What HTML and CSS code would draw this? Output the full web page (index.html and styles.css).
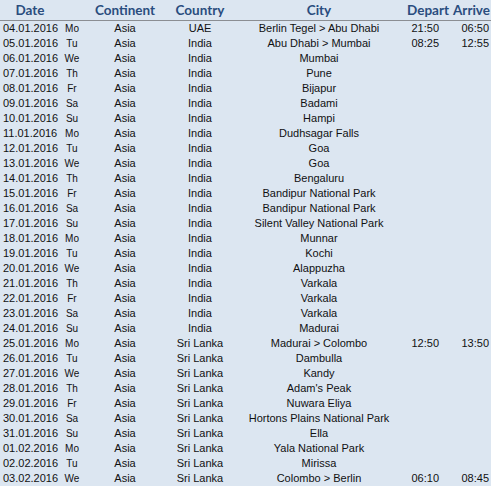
FILE: index.html
```html
<!DOCTYPE html>
<html>
<head>
<meta charset="utf-8">
<link rel="stylesheet" href="styles.css">
</head>
<body>
<div class="sheet">
  <div class="row head">
    <div class="c date">Date</div>
    <div class="c wd"></div>
    <div class="c cont">Continent</div>
    <div class="c ctry">Country</div>
    <div class="c city">City</div>
    <div class="c dep">Depart</div>
    <div class="c arr">Arrive</div>
  </div>
  <div class="body" id="body">
    <div class="row"><div class="c date">04.01.2016</div><div class="c wd">Mo</div><div class="c cont">Asia</div><div class="c ctry">UAE</div><div class="c city">Berlin Tegel &gt; Abu Dhabi</div><div class="c dep">21:50</div><div class="c arr">06:50</div></div>
    <div class="row"><div class="c date">05.01.2016</div><div class="c wd">Tu</div><div class="c cont">Asia</div><div class="c ctry">India</div><div class="c city">Abu Dhabi &gt; Mumbai</div><div class="c dep">08:25</div><div class="c arr">12:55</div></div>
    <div class="row"><div class="c date">06.01.2016</div><div class="c wd">We</div><div class="c cont">Asia</div><div class="c ctry">India</div><div class="c city">Mumbai</div><div class="c dep"></div><div class="c arr"></div></div>
    <div class="row"><div class="c date">07.01.2016</div><div class="c wd">Th</div><div class="c cont">Asia</div><div class="c ctry">India</div><div class="c city">Pune</div><div class="c dep"></div><div class="c arr"></div></div>
    <div class="row"><div class="c date">08.01.2016</div><div class="c wd">Fr</div><div class="c cont">Asia</div><div class="c ctry">India</div><div class="c city">Bijapur</div><div class="c dep"></div><div class="c arr"></div></div>
    <div class="row"><div class="c date">09.01.2016</div><div class="c wd">Sa</div><div class="c cont">Asia</div><div class="c ctry">India</div><div class="c city">Badami</div><div class="c dep"></div><div class="c arr"></div></div>
    <div class="row"><div class="c date">10.01.2016</div><div class="c wd">Su</div><div class="c cont">Asia</div><div class="c ctry">India</div><div class="c city">Hampi</div><div class="c dep"></div><div class="c arr"></div></div>
    <div class="row"><div class="c date">11.01.2016</div><div class="c wd">Mo</div><div class="c cont">Asia</div><div class="c ctry">India</div><div class="c city">Dudhsagar Falls</div><div class="c dep"></div><div class="c arr"></div></div>
    <div class="row"><div class="c date">12.01.2016</div><div class="c wd">Tu</div><div class="c cont">Asia</div><div class="c ctry">India</div><div class="c city">Goa</div><div class="c dep"></div><div class="c arr"></div></div>
    <div class="row"><div class="c date">13.01.2016</div><div class="c wd">We</div><div class="c cont">Asia</div><div class="c ctry">India</div><div class="c city">Goa</div><div class="c dep"></div><div class="c arr"></div></div>
    <div class="row"><div class="c date">14.01.2016</div><div class="c wd">Th</div><div class="c cont">Asia</div><div class="c ctry">India</div><div class="c city">Bengaluru</div><div class="c dep"></div><div class="c arr"></div></div>
    <div class="row"><div class="c date">15.01.2016</div><div class="c wd">Fr</div><div class="c cont">Asia</div><div class="c ctry">India</div><div class="c city">Bandipur National Park</div><div class="c dep"></div><div class="c arr"></div></div>
    <div class="row"><div class="c date">16.01.2016</div><div class="c wd">Sa</div><div class="c cont">Asia</div><div class="c ctry">India</div><div class="c city">Bandipur National Park</div><div class="c dep"></div><div class="c arr"></div></div>
    <div class="row"><div class="c date">17.01.2016</div><div class="c wd">Su</div><div class="c cont">Asia</div><div class="c ctry">India</div><div class="c city">Silent Valley National Park</div><div class="c dep"></div><div class="c arr"></div></div>
    <div class="row"><div class="c date">18.01.2016</div><div class="c wd">Mo</div><div class="c cont">Asia</div><div class="c ctry">India</div><div class="c city">Munnar</div><div class="c dep"></div><div class="c arr"></div></div>
    <div class="row"><div class="c date">19.01.2016</div><div class="c wd">Tu</div><div class="c cont">Asia</div><div class="c ctry">India</div><div class="c city">Kochi</div><div class="c dep"></div><div class="c arr"></div></div>
    <div class="row"><div class="c date">20.01.2016</div><div class="c wd">We</div><div class="c cont">Asia</div><div class="c ctry">India</div><div class="c city">Alappuzha</div><div class="c dep"></div><div class="c arr"></div></div>
    <div class="row"><div class="c date">21.01.2016</div><div class="c wd">Th</div><div class="c cont">Asia</div><div class="c ctry">India</div><div class="c city">Varkala</div><div class="c dep"></div><div class="c arr"></div></div>
    <div class="row"><div class="c date">22.01.2016</div><div class="c wd">Fr</div><div class="c cont">Asia</div><div class="c ctry">India</div><div class="c city">Varkala</div><div class="c dep"></div><div class="c arr"></div></div>
    <div class="row"><div class="c date">23.01.2016</div><div class="c wd">Sa</div><div class="c cont">Asia</div><div class="c ctry">India</div><div class="c city">Varkala</div><div class="c dep"></div><div class="c arr"></div></div>
    <div class="row"><div class="c date">24.01.2016</div><div class="c wd">Su</div><div class="c cont">Asia</div><div class="c ctry">India</div><div class="c city">Madurai</div><div class="c dep"></div><div class="c arr"></div></div>
    <div class="row"><div class="c date">25.01.2016</div><div class="c wd">Mo</div><div class="c cont">Asia</div><div class="c ctry">Sri Lanka</div><div class="c city">Madurai &gt; Colombo</div><div class="c dep">12:50</div><div class="c arr">13:50</div></div>
    <div class="row"><div class="c date">26.01.2016</div><div class="c wd">Tu</div><div class="c cont">Asia</div><div class="c ctry">Sri Lanka</div><div class="c city">Dambulla</div><div class="c dep"></div><div class="c arr"></div></div>
    <div class="row"><div class="c date">27.01.2016</div><div class="c wd">We</div><div class="c cont">Asia</div><div class="c ctry">Sri Lanka</div><div class="c city">Kandy</div><div class="c dep"></div><div class="c arr"></div></div>
    <div class="row"><div class="c date">28.01.2016</div><div class="c wd">Th</div><div class="c cont">Asia</div><div class="c ctry">Sri Lanka</div><div class="c city">Adam's Peak</div><div class="c dep"></div><div class="c arr"></div></div>
    <div class="row"><div class="c date">29.01.2016</div><div class="c wd">Fr</div><div class="c cont">Asia</div><div class="c ctry">Sri Lanka</div><div class="c city">Nuwara Eliya</div><div class="c dep"></div><div class="c arr"></div></div>
    <div class="row"><div class="c date">30.01.2016</div><div class="c wd">Sa</div><div class="c cont">Asia</div><div class="c ctry">Sri Lanka</div><div class="c city">Hortons Plains National Park</div><div class="c dep"></div><div class="c arr"></div></div>
    <div class="row"><div class="c date">31.01.2016</div><div class="c wd">Su</div><div class="c cont">Asia</div><div class="c ctry">Sri Lanka</div><div class="c city">Ella</div><div class="c dep"></div><div class="c arr"></div></div>
    <div class="row"><div class="c date">01.02.2016</div><div class="c wd">Mo</div><div class="c cont">Asia</div><div class="c ctry">Sri Lanka</div><div class="c city">Yala National Park</div><div class="c dep"></div><div class="c arr"></div></div>
    <div class="row"><div class="c date">02.02.2016</div><div class="c wd">Tu</div><div class="c cont">Asia</div><div class="c ctry">Sri Lanka</div><div class="c city">Mirissa</div><div class="c dep"></div><div class="c arr"></div></div>
    <div class="row"><div class="c date">03.02.2016</div><div class="c wd">We</div><div class="c cont">Asia</div><div class="c ctry">Sri Lanka</div><div class="c city">Colombo &gt; Berlin</div><div class="c dep">06:10</div><div class="c arr">08:45</div></div>
  </div>
</div>
</body>
</html>
```
FILE: styles.css
```css
html, body {
  margin: 0;
  padding: 0;
  background: #dce6f1;
}
.sheet {
  width: 491px;
  height: 486px;
  overflow: hidden;
  background: #dce6f1;
  font-family: "Liberation Sans", Arial, sans-serif;
  font-size: 11px;
  color: #111;
}
.row {
  display: grid;
  grid-template-columns: 60px 24px 82px 68px 170px 48px 39px;
  height: 15px;
  line-height: 15px;
  white-space: nowrap;
}
.row.head {
  height: 20px;
  line-height: 21px;
  border-bottom: 1px solid #8b8e93;
  font-family: Lato, "Open Sans", sans-serif;
  font-weight: bold;
  font-size: 13.5px;
  color: #2a4d7e;
}
.c {
  text-align: center;
  overflow: visible;
}
.row .date { text-align: left; padding-left: 3px; }
.row.head .date { text-align: center; padding-left: 0; }
.wd { font-size: 10px; }
.row .dep { text-align: right; padding-right: 13px; }
.row .arr { text-align: right; padding-right: 2px; }
.row.head .dep, .row.head .arr { text-align: center; padding-right: 0; }
```
